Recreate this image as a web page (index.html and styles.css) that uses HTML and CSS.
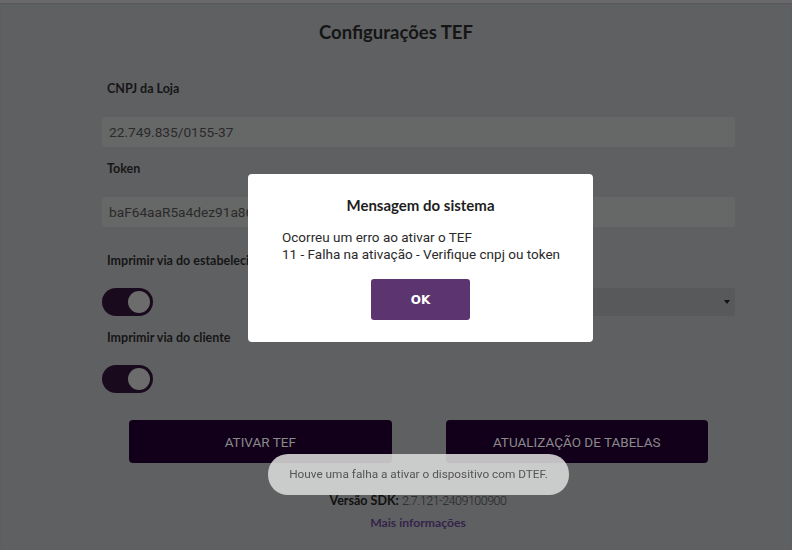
FILE: index.html
```html
<!DOCTYPE html>
<html lang="pt-BR">
<head>
  <meta charset="UTF-8">
  <title>Configurações TEF</title>
  <link rel="stylesheet" href="styles.css">
</head>
<body>
  <h1 class="title">Configurações TEF</h1>

  <div class="form">
    <label class="label">CNPJ da Loja</label>
    <div class="input">22.749.835/0155-37</div>

    <label class="label">Token</label>
    <div class="input">baF64aaR5a4dez91a86e7d2c4b0f91aa</div>

    <div class="cols">
      <div>
        <label class="label">Imprimir via do estabelecimento</label>
        <div class="toggle"><span class="knob"></span></div>
      </div>
      <div>
        <label class="label">&nbsp;</label>
        <div class="select"><span class="arrow"></span></div>
      </div>
    </div>

    <label class="label">Imprimir via do cliente</label>
    <div class="toggle"><span class="knob"></span></div>

    <div class="actions">
      <button class="btn">ATIVAR TEF</button>
      <button class="btn">ATUALIZAÇÃO DE TABELAS</button>
    </div>
  </div>

  <p class="version"><b>Versão SDK:</b> <span class="num">2.7.121-2409100900</span></p>
  <a class="more" href="#">Mais informações</a>

  <div class="modal">
    <h2 class="modal-title">Mensagem do sistema</h2>
    <p class="modal-text">Ocorreu um erro ao ativar o TEF<br>11 - Falha na ativação - Verifique cnpj ou token</p>
    <button class="ok">OK</button>
  </div>

  <div class="toast">Houve uma falha a ativar o dispositivo com DTEF.</div>
</body>
</html>
```

FILE: styles.css
```css
body {
  margin: 0;
  background-color: #5f6062;
  border-top: 3px solid #69696b;
  box-shadow: inset 0 1px 1px #58585a;
  font-family: Lato, "DejaVu Sans", sans-serif;
  color: #141414;
  height: 547px;
  overflow: hidden;
}
.title {
  margin: 17px 0 0;
  text-align: center;
  font-size: 18.5px;
  line-height: 24px;
  font-weight: bold;
  color: #151515;
}
.form {
  margin-left: 102px;
  width: 633px;
  margin-top: 37px;
}
.label {
  display: block;
  padding-left: 5px;
  font-size: 12.5px;
  line-height: 16px;
  font-weight: bold;
  color: #161616;
}
.input {
  margin: 20px 0 14px;
  height: 30px;
  line-height: 30px;
  padding-left: 7px;
  background-color: #666767;
  border-radius: 3px;
  font-family: Roboto, sans-serif;
  font-size: 13.7px;
  color: #2a2a2a;
  white-space: nowrap;
  overflow: hidden;
}
.cols {
  display: grid;
  grid-template-columns: 1fr 1fr;
  gap: 14px;
  margin-top: 26px;
}
.toggle {
  margin: 19px 0 14px;
  width: 51px;
  height: 28px;
  border-radius: 14px;
  background-color: #1a0a1e;
  display: flex;
  align-items: center;
  justify-content: flex-end;
  padding-right: 3px;
  box-sizing: border-box;
}
.knob {
  width: 22px;
  height: 22px;
  border-radius: 50%;
  background-color: #6c6c6d;
}
.select {
  margin: 19px 0 14px;
  height: 28px;
  background-color: #58595a;
  border-radius: 3px;
  display: flex;
  align-items: center;
  justify-content: flex-end;
  padding-right: 5px;
}
.arrow {
  border-left: 3px solid transparent;
  border-right: 3px solid transparent;
  border-top: 4px solid #111;
}
.actions {
  display: flex;
  gap: 54px;
  padding: 0 27px;
  margin-top: 27px;
}
.btn {
  flex: 1;
  height: 43px;
  border: none;
  border-radius: 4px;
  background-color: #12001a;
  color: #8a8a8b;
  font-family: Roboto, sans-serif;
  font-size: 13.5px;
}
.version {
  margin: 30px 0 0;
  padding-left: 44px;
  text-align: center;
  font-size: 12.5px;
  line-height: 16px;
  color: #222;
}
.version b {
  color: #111;
}
.num {
  font-family: Roboto, sans-serif;
  font-weight: 300;
  letter-spacing: -0.5px;
  color: #262626;
}
.more {
  display: block;
  margin-top: 6px;
  padding-left: 44px;
  text-align: center;
  font-size: 12.2px;
  line-height: 16px;
  font-weight: bold;
  color: #36234a;
  text-decoration: none;
}
.modal {
  position: fixed;
  left: 248px;
  top: 174px;
  width: 345px;
  height: 168px;
  background-color: #fff;
  border-radius: 4px;
  box-sizing: border-box;
  padding: 21px 20px 0 34px;
}
.modal-title {
  margin: 0 0 0 -14px;
  text-align: center;
  font-size: 15px;
  line-height: 20px;
  font-weight: bold;
  color: #1e1e1e;
}
.modal-text {
  margin: 14px 0 0;
  font-family: Roboto, sans-serif;
  font-size: 13.5px;
  line-height: 17px;
  color: #2a2a2a;
}
.ok {
  display: block;
  margin: 16px 0 0 89px;
  width: 99px;
  height: 41px;
  border: none;
  border-radius: 3px;
  background-color: #5c3570;
  color: #fff;
  font-family: "DejaVu Sans", sans-serif;
  font-weight: bold;
  font-size: 12px;
}
.toast {
  position: fixed;
  left: 268px;
  top: 454px;
  width: 301px;
  height: 41px;
  line-height: 41px;
  border-radius: 20px;
  background-color: rgba(218, 218, 218, 0.88);
  text-align: center;
  font-family: Roboto, sans-serif;
  font-size: 11.8px;
  color: #555;
}
```
